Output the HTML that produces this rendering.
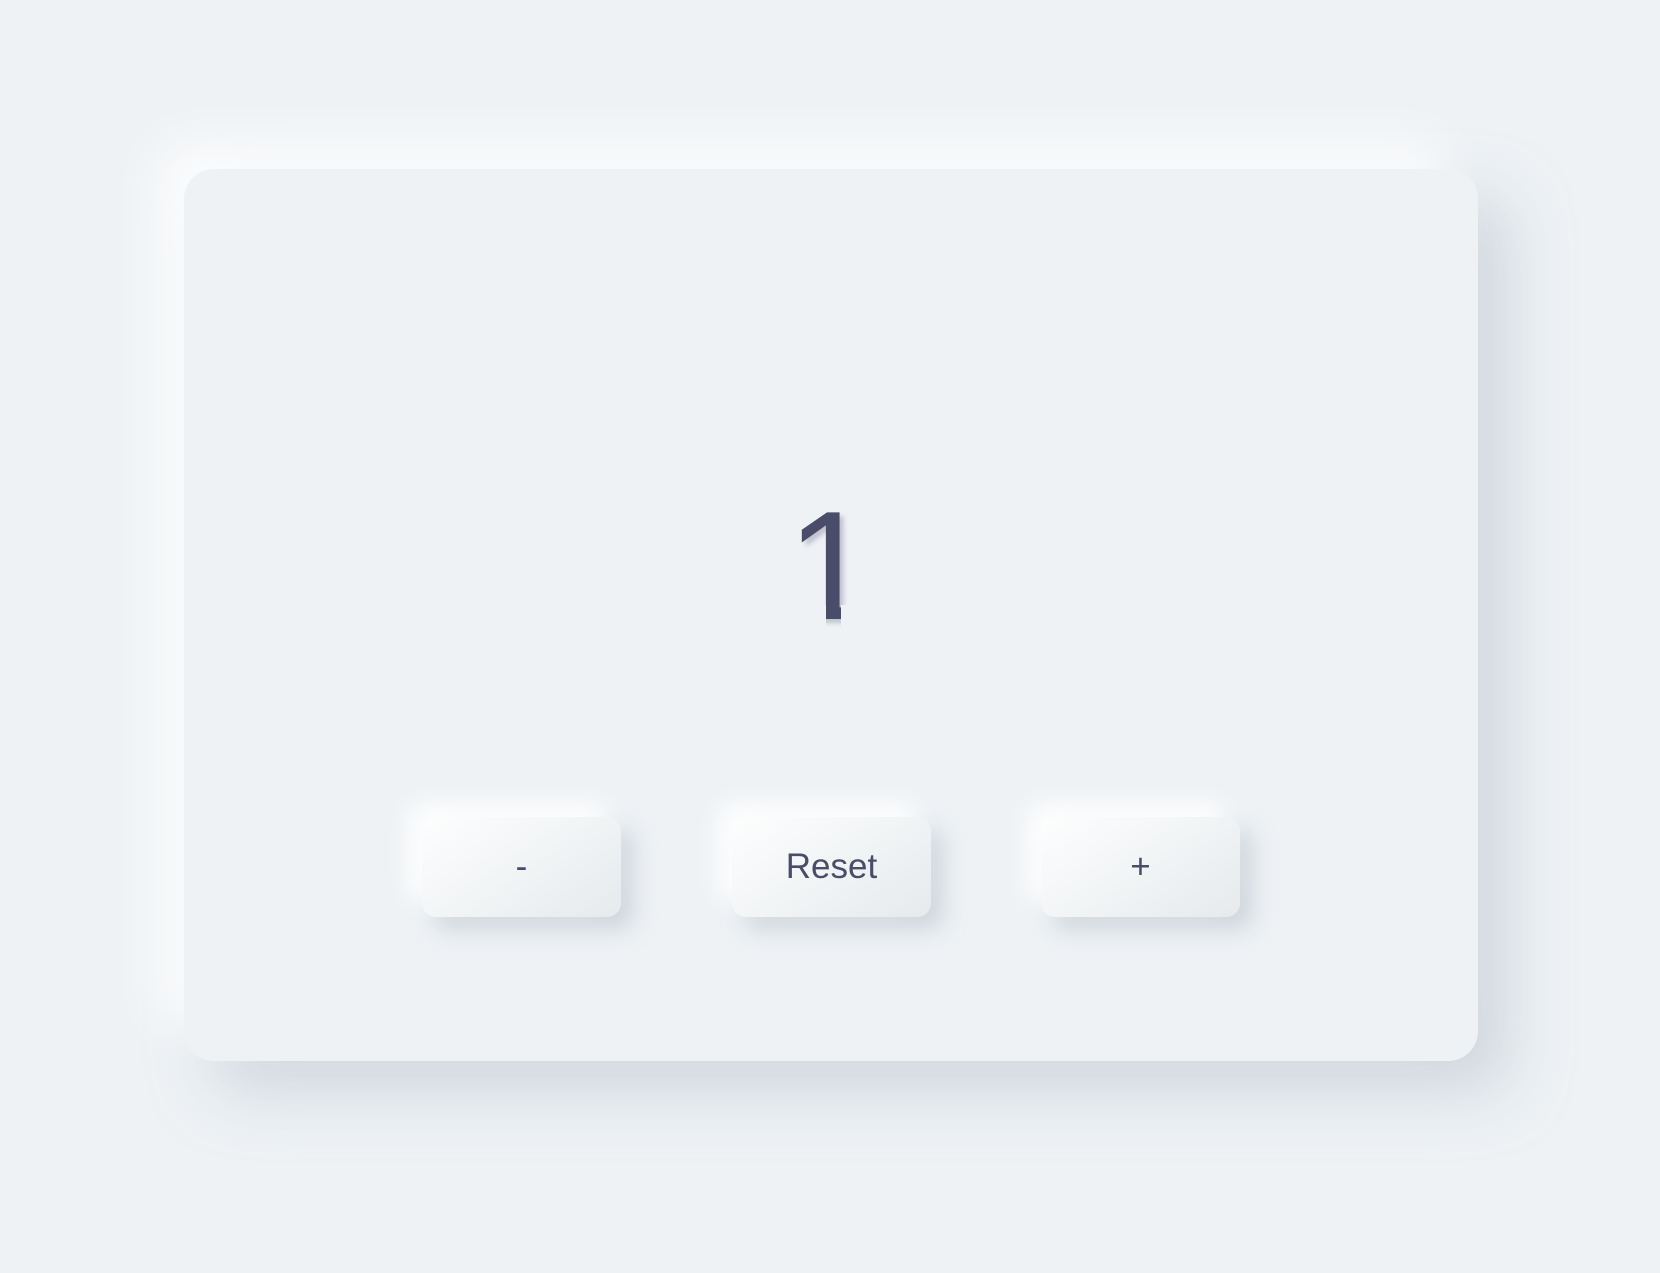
<!DOCTYPE html>
<html><head><meta charset="utf-8"><style>
html,body{margin:0;padding:0;width:1660px;height:1273px;background:#eef2f5;overflow:hidden;font-family:"Liberation Sans",Arial,sans-serif;}
.card{position:absolute;left:184px;top:169px;width:1294px;height:892px;border-radius:30px;background:#eef2f5;
box-shadow:-30px -30px 50px rgba(255,255,255,0.75),30px 30px 60px rgba(180,190,200,0.5);}
.num{position:absolute;left:0;width:1660px;top:466px;height:200px;text-align:center;font-size:155px;line-height:200px;color:#4a4d6a;text-shadow:4px 4px 4px rgba(150,150,170,0.5);
clip-path:polygon(0 0,1660px 0,1660px 139px,841px 139px,841px 200px,826px 200px,826px 139px,0 139px);}
.btn{position:absolute;top:817px;width:199px;height:100px;border-radius:14px;background:linear-gradient(145deg,#fdfefe,#e6eaed);
box-shadow:-14px -14px 26px rgba(255,255,255,0.95),12px 12px 22px rgba(175,185,195,0.5);
color:#4a4d6a;font-size:35px;text-align:center;line-height:100px;}
</style></head><body>
<div class="card"></div>
<div class="num">1</div>
<div class="btn" style="left:422px">-</div>
<div class="btn" style="left:732px">Reset</div>
<div class="btn" style="left:1041px">+</div>
</body></html>
